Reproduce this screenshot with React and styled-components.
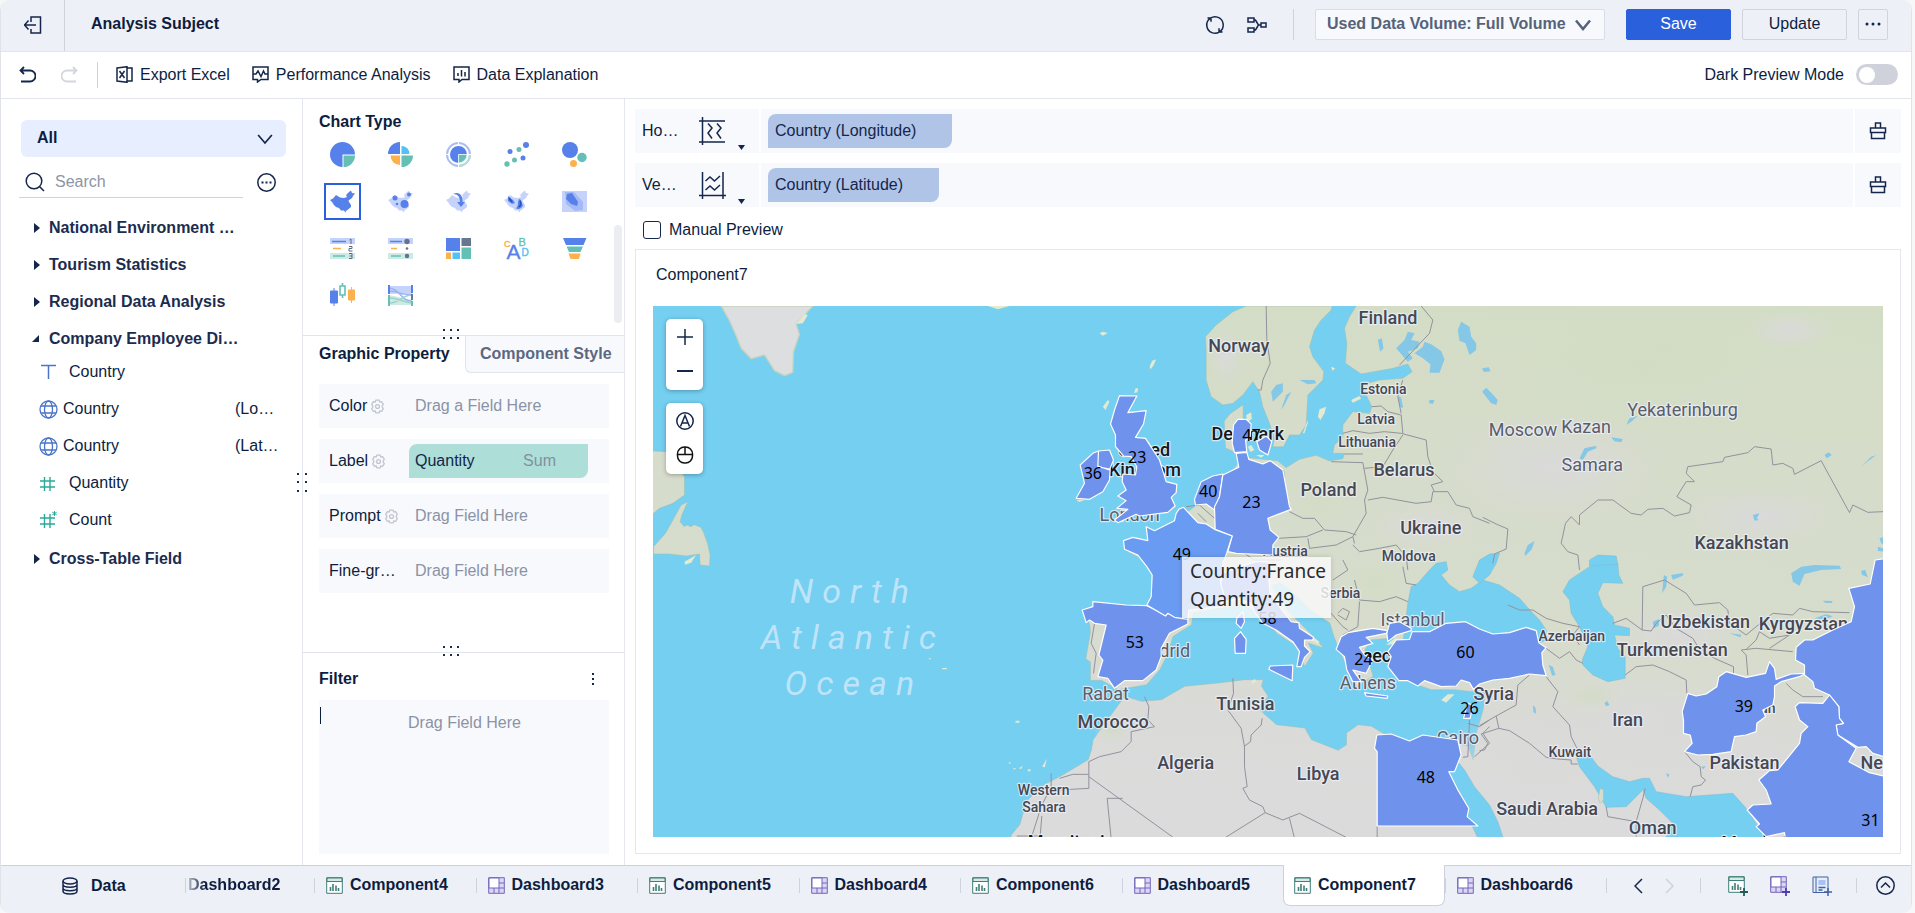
// --------------------------------------------------
//   Import
// --------------------------------------------------

import React from 'react';
import styled, { createGlobalStyle, css } from 'styled-components';



// --------------------------------------------------
//   Styles : Page
// --------------------------------------------------

const GlobalStyle = createGlobalStyle`
  * {
    box-sizing: border-box;
  }

  body {
    margin: 0;
    background: #f7f7f8;
    font-family: 'Liberation Sans', Arial, sans-serif;
    font-size: 16px;
    line-height: 20px;
    color: #0d1d40;
  }

  button, input, select {
    margin: 0;
    padding: 0;
    border: 0;
    background: none;
    font: inherit;
    color: inherit;
  }

  button {
    cursor: pointer;
  }

  svg {
    display: block;
    flex: none;
  }
`;

const Page = styled.div`
  display: flex;
  flex-direction: column;
  min-height: 100vh;
  margin-right: 3px;
  border: solid #e0e3e8;
  border-width: 0 1px;
  border-radius: 10px;
  overflow: hidden;
  background: #ffffff;
`;

const Icon = styled.svg`
  fill: none;
  stroke: ${({ $color }) => $color || '#14264b'};
  stroke-width: 1.5;
`;

const VerticalLine = styled.span`
  width: 1px;
  height: ${({ $height }) => $height}px;
  background: #cdd2dc;
`;



// --------------------------------------------------
//   Styles : Header
// --------------------------------------------------

const Header = styled.header`
  display: flex;
  align-items: center;
  height: 52px;
  padding-right: 23px;
  padding-bottom: 2px;
  border-bottom: 1px solid #e1e5ec;
  background: #edf0f6;
`;

const ExitButton = styled.button`
  display: flex;
  align-items: center;
  justify-content: center;
  align-self: flex-start;
  width: 64px;
  height: 51px;
  padding-top: 1px;
  padding-bottom: 3px;
  border-right: 1px solid #cdd2dc;
`;

const Title = styled.h1`
  flex: 1;
  margin: 0;
  padding-bottom: 2px;
  padding-left: 26px;
  font-size: 16px;
  line-height: 20px;
`;

const HeaderIcons = styled.div`
  display: flex;
  align-items: center;
  gap: 22px;
  height: 31px;
  margin-right: 21px;
  padding-right: 26px;
  border-right: 1px solid #cdd2dc;
`;

const HeaderButtons = styled.div`
  display: flex;
  gap: 11px;
`;

const SelectBox = styled.div`
  position: relative;
  display: flex;
  align-items: center;
  
  select {
    width: 100%;
    height: 100%;
    appearance: none;
    font-weight: bold;
    outline: 0;
  }
  
  svg {
    position: absolute;
    right: 13px;
    pointer-events: none;
  }
`;

const VolumeSelect = styled(SelectBox)`
  width: 290px;
  height: 31px;
  margin-right: 10px;
  border: 1px solid #d9dde5;
  border-radius: 2px;
  background: #f7f9fd;
  color: #56627a;
  
  select {
    padding-left: 11px;
    padding-bottom: 2px;
  }
`;

const HeaderButton = styled.button`
  display: flex;
  align-items: center;
  justify-content: center;
  width: ${({ $narrow }) => $narrow ? 30 : 105}px;
  height: 31px;
  padding-bottom: 2px;
  border: 1px solid #cfd4dd;
  border-radius: 2px;
  
  ${({ $primary }) => $primary && css`
    border-color: #2a60dc;
    background: #2a60dc;
    color: #ffffff;
  `}
`;



// --------------------------------------------------
//   Styles : Toolbar
// --------------------------------------------------

const Toolbar = styled.div`
  display: flex;
  align-items: center;
  height: 47px;
  padding: 0 13px 1px 18px;
  border-bottom: 1px solid #e4e6ee;
`;

const HistoryButtons = styled.div`
  display: flex;
  gap: 25px;
  margin-right: 19px;
`;

const ToolButtons = styled.div`
  display: flex;
  gap: 22px;
  margin-left: 18px;
`;

const ToolButton = styled.button`
  display: flex;
  align-items: center;
  gap: 7px;
`;

const DarkMode = styled.label`
  display: flex;
  align-items: center;
  gap: 12px;
  margin-left: auto;
`;

const Switch = styled.input`
  display: flex;
  align-items: center;
  appearance: none;
  width: 42px;
  height: 21px;
  padding: 0 3px;
  border-radius: 11px;
  background: #cfd2da;
  
  &::before {
    content: '';
    width: 16px;
    height: 16px;
    border-radius: 50%;
    background: #ffffff;
  }
  
  &:checked {
    justify-content: flex-end;
    background: #2a60dc;
  }
`;



// --------------------------------------------------
//   Styles : Field Panel
// --------------------------------------------------

const Body = styled.div`
  display: flex;
  flex: 1;
`;

const FieldPanel = styled.aside`
  position: relative;
  width: 302px;
  padding: 21px 0 0 18px;
  border-right: 1px solid #e4e7ef;
`;

const AllSelect = styled(SelectBox)`
  width: 265px;
  height: 37px;
  margin-left: 2px;
  border-radius: 6px;
  background: #e6eeff;
  
  select {
    padding-left: 16px;
    padding-bottom: 2px;
  }
`;

const SearchRow = styled.div`
  display: flex;
  align-items: center;
  gap: 14px;
  height: 41px;
  margin-bottom: 14px;
`;

const SearchBox = styled.label`
  display: flex;
  align-items: center;
  gap: 10px;
  width: 224px;
  height: 41px;
  padding-top: 9px;
  padding-left: 6px;
  border-bottom: 1px solid #cfd3dd;
  
  input {
    width: 170px;
    outline: 0;
  }
  
  input::placeholder {
    color: #8c95a6;
    opacity: 1;
  }
`;

const MoreButton = styled.button`
  padding-top: 9px;
`;

const Tree = styled.ul`
  display: flex;
  flex-direction: column;
  gap: 5px;
  margin: 0;
  padding: 0 0 0 12px;
  list-style: none;
`;

const Folder = styled.button`
  display: flex;
  align-items: center;
  gap: 8px;
  height: 32px;
  font-weight: bold;
  color: #1c2c4f;
`;

const FieldList = styled.ul`
  display: grid;
  grid-auto-rows: 32px;
  gap: 5px;
  margin: 0;
  padding: 1px 0 2px 8px;
  list-style: none;
`;

const Field = styled.li`
  display: flex;
  align-items: center;
  gap: ${({ $globe }) => $globe ? 5 : 12}px;
  
  em {
    width: 67px;
    margin-left: auto;
    font-style: normal;
  }
`;



// --------------------------------------------------
//   Styles : Chart Panel
// --------------------------------------------------

const ChartPanel = styled.section`
  display: flex;
  flex-direction: column;
  width: 322px;
  border-right: 1px solid #e4e7ef;
`;

const PanelTitle = styled.h2`
  margin: 0;
  font-size: 16px;
  line-height: 20px;
`;

const ChartTypes = styled.div`
  position: relative;
  height: 237px;
  padding: 13px 0 0 16px;
  border-bottom: 1px solid #e1e4ec;
`;

const ChartGrid = styled.div`
  display: grid;
  grid-template-columns: repeat(5, 58px);
  grid-auto-rows: 47px;
  margin-top: -1px;
  margin-left: -5px;
`;

const ChartButton = styled.button`
  display: flex;
  align-items: center;
  justify-content: center;
  width: 37px;
  height: 37px;
  margin: 5px 10px;
  border: 2px solid ${({ $active }) => $active ? '#2a60dc' : 'transparent'};
`;

const ScrollThumb = styled.span`
  position: absolute;
  top: 126px;
  right: 2px;
  width: 8px;
  height: 98px;
  border-radius: 4px;
  background: #ebedf3;
`;

const Grip = styled.span`
  position: absolute;
  bottom: -5px;
  left: 140px;
`;

const SideGrip = styled.span`
  position: absolute;
  top: 374px;
  right: -7px;
  z-index: 1;
`;

const Tabs = styled.div`
  display: grid;
  grid-template-columns: 162px 1fr;
  height: 37px;
  font-weight: bold;
`;

const Tab = styled.button`
  padding-bottom: 1px;
  padding-left: 16px;
  text-align: left;
  font-weight: bold;
  white-space: nowrap;
  
  ${({ $inactive }) => $inactive && css`
    border: solid #e1e4ec;
    border-width: 0 0 1px 1px;
    border-radius: 0 0 0 6px;
    background: #f8f9fd;
    color: #5c6880;
    padding-bottom: 0;
    padding-left: 14px;
  `}
`;

const Properties = styled.div`
  position: relative;
  display: flex;
  flex-direction: column;
  gap: 11px;
  height: 280px;
  padding: 11px 15px 0 16px;
  border-bottom: 1px solid #e1e4ec;
`;

const Property = styled.div`
  display: flex;
  align-items: center;
  height: 44px;
  padding-left: 10px;
  background: #f8f9fd;
`;

const PropertyName = styled.span`
  display: flex;
  align-items: center;
  gap: 3px;
  width: 80px;
  
  button {
    padding-top: 1px;
  }
`;

const DropHint = styled.span`
  padding-left: 6px;
  color: #8a93a5;
`;

const Pill = styled.div`
  display: flex;
  align-items: center;
  height: 34px;
  padding: 0 36px 0 7px;
  border-radius: 8px 0 8px 0;
  background: #b0c4e8;
  color: #14264b;
`;

const QuantityPill = styled(Pill)`
  justify-content: space-between;
  width: 179px;
  padding: 0 32px 0 6px;
  background: #addfd8;
  
  em {
    font-style: normal;
    color: #82909e;
  }
`;

const Filter = styled.div`
  display: flex;
  flex: 1;
  flex-direction: column;
  padding: 16px 15px 11px 16px;
`;

const FilterHead = styled.div`
  display: flex;
  align-items: center;
  justify-content: space-between;
  height: 20px;
  margin-bottom: 11px;
  
  button {
    padding: 0 14px 0 8px;
  }
`;

const FilterBox = styled.div`
  display: flex;
  flex: 1;
  padding: 7px 1px;
  background: #f8f9fd;
  color: #8a93a5;
  
  span {
    padding: 6px 0 0 87px;
  }
`;

const Caret = styled.i`
  width: 1px;
  height: 17px;
  background: #0d1d40;
`;



// --------------------------------------------------
//   Styles : Preview
// --------------------------------------------------

const Main = styled.main`
  display: flex;
  flex: 1;
  flex-direction: column;
  min-width: 0;
  padding: 10px 10px 11px;
`;

const Axis = styled.div`
  display: grid;
  grid-template-columns: 124px 1fr 46px;
  gap: 2px;
  height: 44px;
  margin-bottom: 10px;
`;

const AxisCell = styled.div`
  display: flex;
  align-items: center;
  padding-left: 7px;
  background: #f8f9fd;
  
  &:last-child {
    justify-content: center;
    padding: 0;
  }
`;

const AxisName = styled.span`
  width: 56px;
`;

const AxisButton = styled.button`
  display: flex;
  align-items: flex-end;
  gap: 12px;
  padding-top: 4px;
  
  svg:first-child {
    margin-bottom: 5px;
  }
`;

const ManualPreview = styled.label`
  display: flex;
  align-items: center;
  gap: 8px;
  height: 26px;
  margin-bottom: 6px;
  padding-left: 8px;
  
  input {
    appearance: none;
    width: 18px;
    height: 18px;
    border: 1px solid #14264b;
    border-radius: 3px;
    background: #ffffff;
  }
  
  input:checked {
    background: #2a60dc;
  }
`;

const Preview = styled.section`
  display: flex;
  flex: 1;
  flex-direction: column;
  padding: 0 17px 16px;
  border: 1px solid #e4e7ef;
`;

const PreviewTitle = styled.h3`
  margin: 0;
  padding: 15px 3px 21px;
  font-size: 16px;
  line-height: 20px;
  font-weight: normal;
`;

const MapBox = styled.div`
  position: relative;
  flex: 1;
  overflow: hidden;
  
  > svg {
    position: absolute;
    width: 100%;
    height: 100%;
  }
`;

const MapControls = styled.div`
  position: absolute;
  top: 13px;
  left: 13px;
  display: flex;
  flex-direction: column;
  gap: 13px;
`;

const MapControlGroup = styled.div`
  display: grid;
  grid-auto-rows: 34px;
  width: 37px;
  height: 71px;
  padding-top: 1px;
  border-radius: 5px;
  background: #ffffff;
  box-shadow: 0 1px 4px rgba(0, 0, 0, .3);
  
  button {
    display: flex;
    align-items: center;
    justify-content: center;
  }
`;

const Tooltip = styled.div`
  position: absolute;
  top: 251px;
  left: 529px;
  width: 149px;
  height: 61px;
  padding: 0 8px;
  background: rgba(250, 250, 250, .82);
  box-shadow: 0 0 5px rgba(0, 0, 0, .15);
  font-family: 'Noto Sans', sans-serif;
  font-size: 19px;
  line-height: 28px;
  color: #2b2b2b;
  white-space: nowrap;
`;

const Land = styled.path`
  fill: url(#land);
  stroke: #9dbfae;
  stroke-width: 1.5;
`;

const Sea = styled.path`
  fill: #74cff1;
  stroke: #86b9c6;
  stroke-width: 1.5;
`;

const Lake = styled.path`
  fill: #84c7e6;
`;

const Islet = styled.path`
  fill: #e4e9cf;
`;

const Border = styled.path`
  fill: none;
  stroke: #92929e;
  stroke-width: 3;
  stroke-linejoin: round;
`;

const Country = styled.path`
  fill: ${({ $hover }) => $hover ? '#6a9bf2' : '#6f93ed'};
  stroke: #ffffff;
  stroke-width: 3.5;
  stroke-linejoin: round;
`;

const Place = styled.text`
  font-family: Roboto, sans-serif;
  font-size: ${({ $small }) => $small ? 42 : 54}px;
  font-weight: ${({ $city }) => $city ? 400 : 500};
  fill: ${({ $dark, $city }) => $dark ? '#15181d' : $city ? '#5a5d6a' : '#454852'};
  stroke: rgba(238, 240, 248, .8);
  stroke-width: 7;
  stroke-linejoin: round;
  paint-order: stroke;
`;

const Ocean = styled.text`
  font-family: Roboto, sans-serif;
  font-size: 102px;
  font-weight: 400;
  font-style: italic;
  letter-spacing: 27px;
  text-anchor: middle;
  fill: #bfe4f9;
`;

const Value = styled.text`
  font-family: 'Noto Sans', sans-serif;
  font-size: 48px;
  text-anchor: middle;
  fill: #000000;
`;



// --------------------------------------------------
//   Styles : Footer
// --------------------------------------------------

const Footer = styled.footer`
  display: flex;
  height: 48px;
  border-top: 1px solid #cbd2de;
  background: #edf0f6;
  font-weight: bold;
`;

const DataButton = styled.button`
  display: flex;
  align-items: center;
  gap: 13px;
  width: 184px;
  height: 39px;
  padding-left: 61px;
  font-weight: bold;
`;

const Sheets = styled.nav`
  display: grid;
  flex: 1;
  grid-template-columns: 129px repeat(8, minmax(0, 1fr));
  height: 41px;
  margin-top: -1px;
  overflow: hidden;
`;

const Sheet = styled.button`
  display: flex;
  align-items: center;
  gap: 7px;
  padding-bottom: 1px;
  font-weight: bold;
  
  &::before {
    content: '';
    width: 1px;
    height: 15px;
    margin-right: 4px;
    background: #cdd2dc;
  }
  
  ${({ $cut }) => $cut && css`
    gap: 0;
    
    &::before {
      margin-right: 2px;
    }
    
    span {
      background: linear-gradient(90deg, #b9c0cc, #0d1d40 16px);
      background-clip: text;
      color: transparent;
    }
  `}
  
  ${({ $active }) => $active && css`
    padding-bottom: 0;
    border: solid #cbd2de;
    border-width: 0 1px 1px 1px;
    border-radius: 0 0 7px 7px;
    background: #ffffff;
    
    &::before {
      width: 0;
      margin-right: 3px;
    }
  `}
`;

const FooterTools = styled.div`
  display: flex;
  align-items: center;
  width: 305px;
  height: 39px;
`;

const FooterGroup = styled.div`
  display: flex;
  align-items: center;
  gap: 22px;
  padding: 0 ${({ $end }) => $end}px 0 ${({ $start }) => $start}px;
`;



// --------------------------------------------------
//   Data
// --------------------------------------------------

const CHINA = 'M0 10 3 8.500 6 5l4 2.500 4 .5 3-1-1-2 3-3 2-1.500 1 2.500 3 .5-2 2.500-1 2-2 1.500-1.500 1L19 12l2 3v2l-3 2.500-2 1.500-.5 1.500-1.500-2h-3L9 18l-3-1-2.500-2.500-1-2z';

const blue = '#5680ea';
const teal = '#64bfb5';
const orange = '#fdb04e';
const sky = '#52c1f5';
const pale = '#c5d3fb';

const chartTypes = [
  { name: 'Pie', icon: <><path d="M12.500 12.500V25A12.500 12.500 0 1 1 25 12.500z" fill={blue} /><path d="M13.500 13.500H25A11.500 11.500 0 0 1 13.500 25z" fill={teal} /></> },
  { name: 'Rose', icon: <><path d="M12 12H0A12 12 0 0 1 12 0z" fill={blue} /><path d="M13.500 12V4a8 8 0 0 1 8 8z" fill={sky} /><path d="M12 13.500V23a9.500 9.500 0 0 1-9.500-9.500z" fill={orange} /><path d="M13.500 13.500H25A11.500 11.500 0 0 1 13.500 25z" fill={teal} /></> },
  { name: 'Multi-Pie', icon: <><circle cx="12.500" cy="12.500" r="11.500" fill="none" stroke="#a9bcf4" strokeWidth="2" /><path d="M12.500 24A11.500 11.500 0 0 0 24 12.500" fill="none" stroke="#b4ded9" strokeWidth="2" /><path d="M12.500 0v4M0 12.500h4M12.500 21v4M21 12.500h4" stroke="#fff" /><circle cx="12.500" cy="12.500" r="8.500" fill={blue} /><path d="M12.500 12.500H21A8.500 8.500 0 0 1 12.500 21z" fill={teal} stroke="#fff" strokeWidth=".8" /></> },
  { name: 'Scatter', icon: <g fill={blue}><circle cx="6" cy="9.500" r="2.500" /><circle cx="22" cy="3" r="3" /><circle cx="19" cy="16" r="2.500" /><g fill={teal}><circle cx="15" cy="7.500" r="2.500" /><circle cx="10.500" cy="18" r="2.500" /><circle cx="3" cy="22" r="2.700" /></g></g> },
  { name: 'Bubble', icon: <><circle cx="8" cy="8" r="8" fill={blue} /><circle cx="20" cy="15.500" r="4.700" fill={teal} /><circle cx="11.500" cy="21.500" r="3.500" fill={orange} /></> },
  { name: 'Area Map', active: true, icon: <path d={CHINA} fill={blue} transform="translate(0 1)" /> },
  { name: 'Point Map', icon: <g transform="translate(0 1)"><path d={CHINA} fill={pale} /><g fill={blue}><circle cx="7" cy="8" r="2.500" /><circle cx="16.500" cy="14" r="4" /><circle cx="21" cy="4.500" r="2" /><circle cx="9" cy="14" r="1.300" /></g></g> },
  { name: 'Flow Map', icon: <g transform="translate(0 1)"><path d={CHINA} fill={pale} /><path d="M7 4c6-3 10 1 9.500 8h2.500l-4 5-4-5h3c0-5-2-8-7-8z" fill={blue} /></g> },
  { name: 'Heat Map', icon: <g transform="translate(0 1)"><path d={CHINA} fill={pale} /><path d="M4 6l5 4 2 3-3 1-4-3zM15 9c3 0 2 4 4 6-1 4-6 5-7 3 3-2 1-5 3-9z" fill={blue} /><path d="M5 8l3 4M16 11c2 3 0 5-1 6" stroke="#2750b8" strokeWidth="1.500" fill="none" /></g> },
  { name: 'Density', icon: <><path d="M0 2h25v21H0z" fill={pale} /><path d="M3 3h9l9 10v8l-8 1-9-7z" fill="#a5b9f4" /><path d="M5 5l5-1 6 9-1 4-6-2-5-5z" fill={blue} /></> },
  { name: 'Grouped Table', icon: <><path d="M0 2h25v6H0z" fill={pale} /><path d="M0 17h25v6H0z" fill="#cdeae5" /><path d="M2 5.500h14" stroke={blue} strokeWidth="1.500" /><path d="M3 12.500h8" stroke={orange} strokeWidth="1.500" /><path d="M3 20h12" stroke={teal} strokeWidth="1.500" /><path d="M19.500 4l1.500-1v5M19 10.500h3v2h-3v2.500h3.500M19 17.500h3v5h-3M19.500 20H22" fill="none" stroke="#5d6a83" /></> },
  { name: 'KPI Table', icon: <><path d="M0 2h25v6H0z" fill={pale} /><path d="M0 17h25v6H0z" fill="#cdeae5" /><path d="M2 5.500h12" stroke={blue} strokeWidth="1.500" /><path d="M3 12.500h6" stroke={orange} strokeWidth="1.500" /><path d="M3 20h10" stroke={teal} strokeWidth="1.500" /><g fill="#66718b"><circle cx="19" cy="5.500" r="2.700" /><circle cx="19" cy="12.500" r="1.300" /><circle cx="19" cy="20" r="2.200" /></g></> },
  { name: 'Treemap', icon: <><path d="M0 2h14v13H0z" fill={blue} /><path d="M15.500 2H25v8h-9.500z" fill="#69768f" /><path d="M15.500 11.500H25V23h-9.500z" fill={teal} /><path d="M0 16.500h5V23H0z" fill={orange} /><path d="M6.500 16.500H14V23H6.500z" fill={sky} /></> },
  { name: 'Word Cloud', icon: <g fontFamily="Liberation Sans"><text x="0" y="11" fontSize="9" fill={orange} stroke={orange} strokeWidth=".4">C</text><text x="14.500" y="10" fontSize="11" fill={teal} stroke={teal} strokeWidth=".3">B</text><text x="2.500" y="23" fontSize="21" fill={blue} stroke={blue} strokeWidth=".3">A</text><text x="17.500" y="20" fontSize="10" fill={sky} stroke={sky} strokeWidth=".4">D</text></g> },
  { name: 'Funnel', icon: <><path d="M1 2h23.500l-3 7H4z" fill={blue} /><path d="M4.500 10.500H21l-2.500 5.500H7z" fill={teal} /><path d="M6.500 17.500h12L17 23H8.500z" fill={orange} /></> },
  { name: 'Box Plot', icon: <><path d="M4 5v18M0.500 8h7v12h-7z" fill={blue} stroke={blue} /><path d="M12.500 0v3m0 9v3M10 3h5v9h-5z" fill="none" stroke={teal} strokeWidth="1.600" /><path d="M21.500 4v16M18.500 7h6v10h-6z" fill={orange} stroke={orange} /></> },
  { name: 'Sankey', icon: <><path d="M1 3l23 0v7L1 11z" fill={pale} /><path d="M1 12l23 5v5L1 22z" fill="#cdeae5" /><path d="M1 5c12 1 12 14 23 13M1 8c10 0 12 5 23 3" stroke="#9db2f1" strokeWidth="1.500" fill="none" /><path d="M1 20c12 0 12-8 23-8M1 15c10 0 12 4 23 5" stroke="#9bd3cc" strokeWidth="1.500" fill="none" /><path d="M1 2v9M24 2v8" stroke={blue} strokeWidth="2" /><path d="M24 11v6" stroke="#69768f" strokeWidth="2" /><path d="M1 12v11M24 18v5" stroke={teal} strokeWidth="2" /></> },
];

const properties = [
  { name: 'Color', gear: true, hint: 'Drag a Field Here' },
  { name: 'Label', gear: true },
  { name: 'Prompt', gear: true, hint: 'Drag Field Here' },
  { name: 'Fine-gr…', hint: 'Drag Field Here' },
];

const sheets = ['Component4', 'Dashboard3', 'Component5', 'Dashboard4', 'Component6', 'Dashboard5', 'Component7', 'Dashboard6'];



// --------------------------------------------------
//   Icons
// --------------------------------------------------

const Chevron = ({ size = 14, color }) => (
  <Icon width={size} height={size} viewBox="0 0 14 14" $color={color}><path d="M1 3.500l6 7 6-7" /></Icon>
);

const GripDots = ({ vertical }) => (
  <svg width={vertical ? 12 : 18} height={vertical ? 20 : 11} fill="#1c2c4f">
    {vertical
      ? [0, 8, 17].map(y => <path key={y} d={`M0 ${y}h2v2H0zM8 ${y}h2v2H8z`} />)
      : [0, 7, 14].map(x => <path key={x} d={`M${x} 0h2v2h-2zM${x} 8h2v2h-2z`} />)
    }
  </svg>
);

const Gear = () => (
  <Icon width="15" height="15" viewBox="0 0 14 14" $color="#c0c5cf">
    <path d="M5.500 1h3l.6 1.800 1.800-.3 1.500 2.500L11.200 7l1.200 2-1.500 2.500-1.800-.3L8.500 13h-3l-.6-1.800-1.800.3L1.600 9l1.200-2-1.200-2 1.500-2.500 1.800.3z" strokeWidth="1.200" />
    <circle cx="7" cy="7" r="1.800" strokeWidth="1.200" />
  </Icon>
);

const Globe = () => (
  <Icon width="19" height="19" viewBox="0 0 19 19" $color="#4b74c9">
    <g strokeWidth="1.300"><circle cx="9.500" cy="9.500" r="8.500" /><ellipse cx="9.500" cy="9.500" rx="4" ry="8.500" /><path d="M2 6h15M2 13h15" /></g>
  </Icon>
);

const Hash = ({ star }) => (
  <Icon width="18" height="18" viewBox="0 0 18 18" $color="#2ba89b">
    <path d="M5.500 3v14M11 3v14M1 7h15M1 13h15" strokeWidth="1.400" />
    {star && <path d="M15.500 0v5M13.300 1.200l4.400 2.600M17.700 1.200l-4.400 2.600" strokeWidth="1" />}
  </Icon>
);

const ComponentIcon = ({ add }) => (
  <svg width={add ? 20 : 17} height={add ? 20 : 17} fill="#fff" stroke="#3f7f79">
    <path d="M.7.7h15.600v15.600H.7z" />
    <path d="M1 1h15v3.500H1z" fill="#d5ebe8" />
    <path d="M4.500 14v-4M7 14V7M10 14V8.500M12.500 14v-3" strokeWidth="1.600" />
    {add && <path d="M12 16h8M16 12v8" stroke="#1f5c58" strokeWidth="1.800" />}
  </svg>
);

const DashboardIcon = ({ add }) => (
  <svg width={add ? 20 : 17} height={add ? 20 : 17} fill="#dcd6f5" stroke="#7266bd">
    <path d="M.7.7h15.600v15.600H.7z" />
    <path d="M1 1h10v10H1z" fill="#fff" />
    <path d="M11 6h5M6 11v5M11 11v5M11 11h5" />
    {add && <path d="M12 16h8M16 12v8" stroke="#4f3fae" strokeWidth="1.800" />}
  </svg>
);

const Clear = () => (
  <Icon width="18" height="18" viewBox="0 0 18 18"><path d="M6.500 6V1h5v5M1.500 6h15v4.500h-15zM2.500 10.500v6h13v-6" /></Icon>
);



// --------------------------------------------------
//   Map
// --------------------------------------------------

const WorldMap = () => (
  <svg viewBox="-1221 18 3693 1593" preserveAspectRatio="xMidYMid slice" role="img" aria-label="Map">
    <defs>
      <linearGradient id="land" gradientUnits="userSpaceOnUse" x1="1100" y1="0" x2="1000" y2="1500">
        <stop offset="0" stopColor="#d3ddc5" />
        <stop offset=".35" stopColor="#d6dccb" />
        <stop offset=".65" stopColor="#d7dccb" />
        <stop offset=".85" stopColor="#dadad8" />
        <stop offset="1" stopColor="#dbdbdb" />
      </linearGradient>
      <radialGradient id="dry">
        <stop offset="0" stopColor="#dadada" />
        <stop offset="1" stopColor="#dadada" stopOpacity="0" />
      </radialGradient>
      <radialGradient id="green">
        <stop offset="0" stopColor="#d2dcc4" stopOpacity=".8" />
        <stop offset="1" stopColor="#d2dcc4" stopOpacity="0" />
      </radialGradient>
    </defs>
    
    {/* 海 */}
    <path d="M-1221 18h3693v1593h-3693z" fill="#74cff1" />
    
    {/* 陸地 */}
    <g transform="translate(-1230 0)">
      <path d="M215 18l25 44 18 41 17 42 30 31 40-11 30 47 30 15 25-10 2-62 18-52-10-31 50-54z" fill="#dddee0" stroke="#c5d3bd" strokeWidth="4" />
      <Land d="M0 452l50 3 55 75v55l-35 25-40 15-30 25zM115 605l-20 10-22 40-25 45-36 40 0 22h48l50 6 40-6 2 33 28 3 2-33-8-35-12-33-8-15-20-8-10 6-12-5-8 5-12-15 5-20z" />
      <Islet d="M140 765l-35 20 2 9 18-6zM1015 18l30 10 35-10zM440 72l25-30 10 3-15 25zM838 1075h6v3h-6zM878 1104h14v4h-14zM1098 1262h12v6h-12zM1108 1405l12-8-5 10zM1178 1400l14-24-6 26zM1135 1408h8v6h-8zM1092 1404h6v4h-6zM1078 1387h5v4h-5z" />
    </g>
    <Land d="M560 18L520 35 470 75 438 110l2 40v90l15 50 35 25 30-5 30-25 30-40 20 30 10 45 20 50 15 45-5 25 32 0 18-35h30l20-30 5-90 45-45 3-25-33-45-10-30 15-50 20-30 30-30 3-12z" />
    <Land d="M890 18L870 50 855 85l7 45-4 60 47 32 95-17 45-13 13 23-28 20-70 5-55 15 15 30 17 35-7 20-50-5-30 40v35l-25 25-5 25h35l-5 16-40 7-40-17-50 12-40 25-25-20-25-3-65-7-35-15-32-14-4-80 17-22 40-28v70l-15 40 5 60-35 42-35 15-30 15-25 55-25 20-30 20-5 20-85 30 5 25-70 5v25l40 20 15 15 28 40-3 60-13 35-162-10-30 25 10 35 2 20-14 80 14 10v55h33l50 28 85-15 40-45 20-40 20-60 55-35 5-35 60-10 90-15 60 35 40 50 60 40 25 60 25-40-15-30 45 15-15-20-45-45-40-40-55-80 25-10 30 20 60 60 60 40 12 40 18 45 30 65 20 40 50-30-25-80 20-30 65-5 20 45 35 90 60 20h70l90 10-5 50-20 70-10 80-15-40-90-25-50 20-100-25-50-30-40-5-35 25v35l-25 17-80-32-20-35-85-10-40-35-15-15 30-35-20-30 5-20-55 0-80 10-100 10-70 40-60 5-50-15-30 40-65 90-5 30-10 30-50 30-25 15-65 35-45 45-20 70-25 30-20 60V1640H2500V0H890z" />
    
    {/* 地形 */}
    <g fill="url(#dry)">
      <ellipse cx="1480" cy="500" rx="330" ry="170" />
      <ellipse cx="2190" cy="90" rx="130" ry="60" />
      <ellipse cx="1100" cy="680" rx="170" ry="70" />
      <ellipse cx="1850" cy="1000" rx="220" ry="90" />
      <ellipse cx="1750" cy="1260" rx="240" ry="130" />
      <ellipse cx="1450" cy="1400" rx="330" ry="200" />
      <ellipse cx="2100" cy="650" rx="230" ry="90" />
      <ellipse cx="500" cy="170" rx="50" ry="90" />
    </g>
    <g fill="url(#green)">
      <ellipse cx="160" cy="1290" rx="60" ry="40" />
      <ellipse cx="950" cy="850" rx="90" ry="60" />
      <ellipse cx="1750" cy="200" rx="400" ry="180" />
      <ellipse cx="1600" cy="1190" rx="90" ry="40" />
      <ellipse cx="780" cy="600" rx="100" ry="80" />
    </g>
    
    {/* 内海 */}
    <Sea d="M1045 910l10-50 20-10 35-40 20-20 30-5 5 25-20 15 25 30 30 20 35-10 35-25 50 15 60 40 40 45 20 20 20 30v30l-50 20-100-5-60-15-60 10-60 22-70-2-30-20z" />
    <Sea d="M1260 780l30-18 30-2-10 30-20 35-30 25-20-20z" />
    <g transform="translate(1260 780)">
      <Sea d="M330 20l40-17 45 7 3 35 12 25-60-2-15 32 15 40 30 30 5 25 45 10v22l-45-2 10 40 22 25v65l-52 10-45-20-30-30-2-15 17-40-25-60-25-40-5-40-20-25 20-35z" />
      <Sea d="M290 588l35-10 30 40 45 32 50 15 40-10h20l20 40 90 15 140-10 40 45 37 55 20 40H555l25-50-40-40-40-35-10-25-50 50-60 2-35-62-45-60z" />
      <Land d="M362 685l10 4v32l-10 8-6-14z" />
      <Lake d="M520 185l18-8v20l-15 8zM548 100l5-55 10 5-3 30zM575 45l35-6v8l-30 12zM940 65l-5-25 30-20 40-5 75 2 5 10-60 3-50 12-15 35zM1030 122l28 1v6h-20zM1005 175l35-12 20 6-25 10zM750 220l35 4-2 8zM208 315l12 5 8 25-10 2zM375 430l8-7 7 12-10 4zM160 435l8 8 2 18-8-4zM560 640l10 3-5 10zM665 620l14-2-8 10zM1145 32l12-2 8 22-18-8z" />
    </g>
    <Sea d="M1168 1415l27-30 20 25 30 50 45 55 25 50 20 60h-75l-35-75 3-25z" />
    <Sea d="M1590 780l25-15 55 3 5 25-85 5z" />
    <Lake d="M1065 160l25-20 5-15 20 8 30 20 10 25-15 40h-30l3-25-25-20zM1010 145l25-25 10-25 20 5-10 20 25 5-5 20-30 10 15 20-15 10zM955 120l12-5 5 30-10 10zM1195 90l10-25 25 15 5 30 15 20v20l-20 15-12-35-18-8zM635 275l15-20 20-5v25l-30 30zM680 285l15-10-20 40-10 15zM720 240l45 0 5 10-25 3zM1110 300l15 0-5 12-12-3zM1268 205l20-3 5 12-20 2zM1015 288l10 5 6 30-10-2zM1268 275l12-12 15 15 20 22-5 15-15-5zM1395 760l10-25 20-12-8 25-20 20zM1560 475l15-30 35-8v8l-25 10-15 25zM1655 412l35 5-5 10-20-3zM1700 375l10-20 25-8-20 18zM2080 645l20-5-8 15 5 5-12 2zM2295 465l12-8 10 8-15 10zM2405 500l30-30 15-4-25 18zM2455 740l17 5v10l-17-2zM2460 715l15-5v25l-10-5z" />
    <Islet d="M120 100l10-5 15 4-15 8zM270 200l8-18 12-4-8 18-8 12zM228 265l8 0-2 12-10 2zM130 320l15-20 5 5-12 25zM560 345l15-8 2 20-15 10zM565 440l10-5 10 15-12 6zM590 465l25 0-10 8zM775 350l5-22 20-8-5 20-12 20zM815 200l12 5-8 8zM875 300l25-12 5 8-25 12zM730 400l15-40 0 8-10 32zM50 600l25 0-15 6zM980 1035l25-20 25 5-25 12zM1145 1200l20-17 20 0-15 15-10 10zM575 1145l10-8 5 5-8 10zM760 1010l20 15-5 8-15-10z" />
    
    {/* 国境 */}
    <Border d="M620 18l2 102 10 70-22 50-5 30h-10M1085 18l35 42-10 40-90 95M1030 240l-15 50 10 50M937 320l28-2 20 17 40 10 5 55M850 400l30-8 50 8 45-5 50 5 75 20 5 50 15 45 30 30-35 10 10 20M815 485l95 3 15 82-10 30 5 40-40 70 5 20M1030 405l-30 45-30 50-55 5M925 600l45-8 100 18 45-5 5-30h45l25 40 40 10 10 25 50 20M672 510l5 50M690 635l40 20h35l30 35 65 5 30 10M655 715l85-5 50-20M745 715l5 30 80-10 50-25M880 735l20 20 60-10 50-10 30 35 5 40M380 620l40-5 45 40M415 640l25 25M855 462h55M1270 652l40 20 35 15-5 60-35 15-5 28M555 760l30 20 80 0" />
    <g transform="translate(0 780)">
      <Border d="M850 0l15 30-45 30M885 60l15 60 60 5 50-15 35 15M815 160l35 40 15 10M900 125l-5 75-45 25M835 160l15-15 20 10-10 25-25-15M1030 20l10 50 30 5M520 355l2 45-17 50 40 55 10 55v60l8 60-13 5 20 35 40 20 7 18 53 22 50-20 140 72M608 475l-3 20-30 30-2 20-20 15M617 758l-120 75M690 775l15 60M255 410l13 30-3 40 20 20-70 15v30l-30 30-65 15-32 15v80l-88 5M88 650l257 185M155 835l-12-120h47M953 798v40M1230 480l-5 110-15 2M1225 490l35 10 30-20M1245 590l45-40-20-30 20-20M105 190l-10 60 15 30-8 60M0 655l40-12h48M-25 640l0 40-30 60-30 95M-128 828h70l5-60" />
    </g>
    <g transform="translate(1260 780)">
      <Border d="M150 345l-35 30-5 60-60 33-50 29M50 468l8 37 32 7 60 38 50 42 35 5M58 505L5 522l20 28-10 20-15 2M200 350l35 45-15 45 50 55 5 35 15 30 12 22M235 597l40 3v12h20M615 575l25 30 22 15 3 30 13 10-13 15-25 5-8 30M437 345l33-25 50-5 50 20 50 25 2 40M490 80l-2 130-48-35-40 15M490 80l65-20 65 40 25 35 75-7 25 22 5 40 50 35 30-25 50-40 60 5 20-20 40 10 110 3M488 210l27 3 15-23 30-25 30 40 50 30 15 25 50 35 57 25v20M785 270l15 15 5 60M785 270l45-5 110 10M800 268l30-28 10-25 30 20 60-10-60 40M85 135l35 15 40 0 40 25 50 15 50 10-20 25 20 30M175 245l25 20 40 30 30-20 20 25 20 10M380 740l5 30 85 15 20-70 7-30M470 785v45M920 370l20 20 30 20 60 0" />
    </g>
    <g transform="translate(1260 0)">
      <Border d="M300 810l-5-45-30-10-20-25 13-60 17-20 25 25v-30l55-45h45l55 40 30 5 20-17 45-3 35 23 45-10 5-23-43-25 28-45h25l-25-25 5-20 105-15 5-13 70-14 20-18 50 7 5 48 30-5 30 15 5 18 80-41 85 156 10-23 45 22 47-2" />
    </g>
    
    {/* 地名 */}
    <Ocean x="-617" y="909">North</Ocean>
    <Ocean x="-620" y="1046">Atlantic</Ocean>
    <Ocean x="-617" y="1186">Ocean</Ocean>
    <Place x="897" y="72">Finland</Place>
    <Place x="446" y="157">Norway</Place>
    <Place x="902" y="283" $small>Estonia</Place>
    <Place x="893" y="373" $small>Latvia</Place>
    <Place x="836" y="441" $small>Lithuania</Place>
    <Place x="942" y="528">Belarus</Place>
    <Place x="723" y="588">Poland</Place>
    <Place x="1022" y="702">Ukraine</Place>
    <Place x="967" y="784" $small>Moldova</Place>
    <Place x="456" y="421" $dark>Denmark</Place>
    <Place x="332" y="468" textAnchor="end" $dark>United</Place>
    <Place x="148" y="529" $dark>Kingdom</Place>
    <Place x="120" y="664" $city>London</Place>
    <Place x="745" y="769" textAnchor="end" $small>Austria</Place>
    <Place x="783" y="893" $small>Serbia</Place>
    <Place x="963" y="979" $city>Istanbul</Place>
    <Place x="392" y="1072" textAnchor="end" $city>Madrid</Place>
    <Place x="68" y="1200" $city>Rabat</Place>
    <Place x="54" y="1284">Morocco</Place>
    <Place x="470" y="1230">Tunisia</Place>
    <Place x="1024" y="1087" textAnchor="end" $dark>Greece</Place>
    <Place x="841" y="1166" $city>Athens</Place>
    <Place x="1242" y="1201">Syria</Place>
    <Place x="1132" y="1331" $city>Cairo</Place>
    <Place x="293" y="1408">Algeria</Place>
    <Place x="712" y="1441">Libya</Place>
    <Place x="-125" y="1485" $small>Western</Place>
    <Place x="-112" y="1536" $small>Sahara</Place>
    <Place x="-95" y="1644" $dark>Mauritania</Place>
    <Place x="1288" y="408" $city>Moscow</Place>
    <Place x="1505" y="400" $city>Kazan</Place>
    <Place x="1506" y="513" $city>Samara</Place>
    <Place x="1703" y="348" $city>Yekaterinburg</Place>
    <Place x="1905" y="748">Kazakhstan</Place>
    <Place x="1437" y="1023" $small>Azerbaijan</Place>
    <Place x="1803" y="983">Uzbekistan</Place>
    <Place x="2098" y="991">Kyrgyzstan</Place>
    <Place x="1672" y="1069">Turkmenistan</Place>
    <Place x="1658" y="1278">Iran</Place>
    <Place x="1467" y="1372" $small>Kuwait</Place>
    <Place x="1950" y="1408">Pakistan</Place>
    <Place x="2148" y="1238" textAnchor="end" $small>Afghanistan</Place>
    <Place x="1310" y="1546">Saudi Arabia</Place>
    <Place x="1708" y="1601">Oman</Place>
    <Place x="2403" y="1408">Nepal</Place>
    <Place x="1985" y="1646" $dark>Mumbai</Place>
    
    {/* データのある国 */}
    <Country d="M180 287l-15 43-12 42 15 33v35l24 28 23 2 17 30-4 25-38-3-2 23 12 25-25 18 25 14-28 23 33 3-40 32 10 8 55-25 10 5 85-11 22-19-12-26 15-14 2-25-32-8-20-65-42-65-30-3 24-40 8-40-55 6 27-50z" />
    <Country d="M117 453l33-3 12 30-12 30-35-12zM100 460l17-7-2 47 37 8-2 32-20 35-40 23-40-3 25-45-13-55z" />
    <Country d="M535 358h25l15 14-3 38-14 10 4 35-37 3-7-28 4-55zM592 425l28-17 17 17-12 40-25-15z" />
    <Country d="M490 522l-10 68-15 40-25-18-32 3-3-17 20-53 35-17z" />
    <Country d="M530 460l32-3 6 21 42 14 22-10 38 28 20 110 5 8-70 27 7 35 26 22-18 23v30l-110-5-25-5 13-47-51-20-2-68 15-30 10-65 48-23z" />
    <g transform="translate(0 780)">
      <Country d="M483 75l7-35 50-20 50-15h32l18 25-12 30 4 40 28 40 35 45 23 3 2 17 42 27-2 8h-25v18l17 17-17 17-10 28h-13l8-45-20-30-50-35-40-20-25-35-10-25-40-15-35 10-12-15zM632 318l68-3-2 47-70-34zM550 155l5 30-10 20-15-15 2-15zM543 215l17 23-2 42h-31l-2-45z" />
      <Country d="M100 125l100 10 62 2 56 28 7-5 60 15v17l-55 28-25 45v25l-15 40-40 32h-55l-30 23-20-30-30-5 15-50-12-15 22-90-35-5-15-10-10 8-12-38 32-10z" />
      <Country d="M865 218l75-13 45 7-5 8-60 12 20 18-40 12 15 23 25 15-20 40-40-10 25 35h-25l-18-35-7-40-25-22 15-38zM915 398l70 10-2 7-63-7z" />
      <Country d="M990 190l30-5 35 20v7l-45 13-25 20-3-25zM985 275l25-35 40-2 8-23h52l50-25 58-5 42 22 40 15 50-4 50-16 30 10 8 36 22 15-13 15 3 37 10 32-50-5-60 13-50 5-40 12-18 16-12-20-25-8-15 18-45 2-50-18-20 16-30-16h-27l-33-42 10-30z" />
      <Country d="M1225 430l15 5-8 40h-20z" />
      <Country d="M952 525l43-3 55 21 40-18 105 15 10 45-20 50h-17l27 55 33 55-5 25 32 28H953V575l-8-10z" />
    </g>
    <Country $hover d="M350 640l8-12 14-6 43 46 25 4 25 16 53 20-16 50-12 32-7 60 12 40-15 30-92 10-3 28-40-6-20-12-7 8-56-33 13-25 3-65-16-25-14-18-13-17-40-17-3-26 28-10 45 10-5-42 25 12 60-30z" />
    <g transform="translate(1260 780)">
      <Country d="M625 400l25 8 30-6 32-22 6-30 22-15 60 17 58-12 12-35 15 20 5 33 45-16 45-2-20 10-55 15-20 13v32l-5 25-30 15 8 20-26 20-2 25-30 10-35 5-10 45-55 8-45 2-40-10 23-25-6-25-20-5v-40l-4-25z" />
      <Country d="M1220-5l-33 5-15 72-64 13 17 55-10 45-55 25-60 30h-25l-25 22-2 38 27 15v30l25 20 5 20 45 20 28 35 2 35 12 15-22 5 5 30 60 37 25-2 20 20 40 12z" />
      <Country d="M1050 405l-20 25-70-2-13 12 13 40 25 20-20 20-5 30-65 80-25 2-32 28 22 30 15 42-55 3-17 15 37 42-10 8 30 30 55-12 3 22h302V650l-50-12-62-33 22-40-55-40-5-30 22-5-12-15-2-35z" />
    </g>
    
    {/* 値 */}
    <Value x="233" y="488">23</Value>
    <Value x="100" y="536">36</Value>
    <Value x="446" y="591">40</Value>
    <Value x="576" y="624">23</Value>
    <Value x="576" y="422">47</Value>
    <Value x="367" y="781">49</Value>
    <Value x="226" y="1044">53</Value>
    <Value x="624" y="973">58</Value>
    <Value x="912" y="1096">24</Value>
    <Value x="1218" y="1075">60</Value>
    <Value x="1230" y="1241">26</Value>
    <Value x="1099" y="1450">48</Value>
    <Value x="2053" y="1237">39</Value>
    <Value x="2433" y="1577">31</Value>
  </svg>
);



// --------------------------------------------------
//   App
// --------------------------------------------------

export default class App extends React.Component {
  
  renderHeader() {
    return (
      <Header>
        <ExitButton aria-label="Exit">
          <Icon width="18" height="18" viewBox="0 0 18 18"><path d="M7 6V1h9.500v16H7v-4M0 9h12M4.500 4.500L.5 9l4 4.500" /></Icon>
        </ExitButton>
        
        <Title>Analysis Subject</Title>
        
        <HeaderIcons>
          <button aria-label="Refresh"><Icon width="20" height="20" viewBox="0 0 20 20"><path d="M5.500 3.200A8.200 8.200 0 0 0 7.500 17.900M14.500 16.800A8.200 8.200 0 0 0 12.500 2.100M5.500 3.200A8 8 0 0 1 12.500 2.100M14.500 16.800A8 8 0 0 1 7.500 17.900M2.500 3h3.500v3.800M17.500 17H14v-3.800" /></Icon></button>
          <button aria-label="Flow"><Icon width="20" height="18" viewBox="0 0 20 18"><path d="M1 2h6v4H1zM1 12h6v4H1zM14 7h5v4h-5zM7 4h1.500l3 5-3 5H7M11.500 9H14" /></Icon></button>
        </HeaderIcons>
        
        <HeaderButtons>
          <VolumeSelect>
            <select aria-label="Used Data Volume"><option>Used Data Volume: Full Volume</option></select>
            <Icon width="16" height="12" viewBox="0 0 16 12" $color="#56627a"><path d="M1 1.500l7 8.500 7-8.500" strokeWidth="2.500" /></Icon>
          </VolumeSelect>
          <HeaderButton $primary>Save</HeaderButton>
          <HeaderButton>Update</HeaderButton>
          <HeaderButton $narrow aria-label="More"><svg width="16" height="4" fill="#14264b"><circle cx="2" cy="2" r="1.500" /><circle cx="8" cy="2" r="1.500" /><circle cx="14" cy="2" r="1.500" /></svg></HeaderButton>
        </HeaderButtons>
      </Header>
    );
  }
  
  
  renderToolbar() {
    return (
      <Toolbar>
        <HistoryButtons>
          <button aria-label="Undo"><Icon width="17" height="17" viewBox="0 0 17 17"><path d="M5 1L1.500 4.500 5 8M1.500 4.500H11a5.500 5.500 0 0 1 0 11H2" strokeWidth="1.800" /></Icon></button>
          <button aria-label="Redo" disabled><Icon width="17" height="17" viewBox="0 0 17 17" $color="#d3d6dc"><path d="M12 1l3.500 3.500L12 8M15.500 4.500H6a5.500 5.500 0 0 0 0 11h9" strokeWidth="1.800" /></Icon></button>
        </HistoryButtons>
        
        <VerticalLine $height={26} />
        
        <ToolButtons>
          <ToolButton>
            <Icon width="17" height="17" viewBox="0 0 17 17"><path d="M1 2l10-1.300v15.600L1 15zM11 2h5v13h-5M3.500 5l5 7M8.500 5l-5 7" /></Icon>
            Export Excel
          </ToolButton>
          <ToolButton>
            <Icon width="17" height="17" viewBox="0 0 17 17"><path d="M1 1h15v12.500H9L5.500 16v-2.500H1zM1 8h3l2-3 3 5.500L11.500 5 13 8h3" /></Icon>
            Performance Analysis
          </ToolButton>
          <ToolButton>
            <Icon width="17" height="17" viewBox="0 0 17 17"><path d="M1 1h15v12.500H9L6 16v-2.500H1zM5 10V7M8.500 10.500V4M12 10.500V6" /></Icon>
            Data Explanation
          </ToolButton>
        </ToolButtons>
        
        <DarkMode>
          Dark Preview Mode
          <Switch type="checkbox" role="switch" />
        </DarkMode>
      </Toolbar>
    );
  }
  
  
  renderFolder(name, open) {
    return (
      <Folder aria-expanded={Boolean(open)}>
        <svg width="10" height="10" fill="#14264b">{open ? <path d="M8 1v7H1z" /> : <path d="M3 0l6 5-6 5z" />}</svg>
        {name}
      </Folder>
    );
  }
  
  
  renderFields() {
    return (
      <FieldPanel>
        <AllSelect>
          <select aria-label="Table"><option>All</option></select>
          <Chevron size={16} />
        </AllSelect>
        
        <SearchRow>
          <SearchBox>
            <Icon width="20" height="20" viewBox="0 0 20 20"><circle cx="9" cy="9" r="7.800" /><path d="M14.500 14.500l4.500 4.500" /></Icon>
            <input type="text" placeholder="Search" aria-label="Search" />
          </SearchBox>
          <MoreButton aria-label="More"><Icon width="19" height="19" viewBox="0 0 19 19"><circle cx="9.500" cy="9.500" r="8.700" /><path d="M4.500 9.500h2m2 0h2m2 0h2" strokeWidth="2" /></Icon></MoreButton>
        </SearchRow>
        
        <Tree>
          <li>{this.renderFolder('National Environment …')}</li>
          <li>{this.renderFolder('Tourism Statistics')}</li>
          <li>{this.renderFolder('Regional Data Analysis')}</li>
          <li>
            {this.renderFolder('Company Employee Di…', true)}
            <FieldList>
              <Field><Icon width="18" height="18" viewBox="0 0 18 18" $color="#4b74c9"><path d="M2 2.500h15M9.500 2.500V16" /></Icon>Country</Field>
              <Field $globe><Globe />Country<em>(Lo…</em></Field>
              <Field $globe><Globe />Country<em>(Lat…</em></Field>
              <Field><Hash />Quantity</Field>
              <Field><Hash star />Count</Field>
            </FieldList>
          </li>
          <li>{this.renderFolder('Cross-Table Field')}</li>
        </Tree>
        
        <SideGrip><GripDots vertical /></SideGrip>
      </FieldPanel>
    );
  }
  
  
  renderChartPanel() {
    return (
      <ChartPanel>
        <ChartTypes>
          <PanelTitle>Chart Type</PanelTitle>
          <ChartGrid>
            {chartTypes.map(({ name, active, icon }) => (
              <ChartButton key={name} aria-label={name} $active={active}>
                <svg width="25" height="25" viewBox="0 0 25 25">{icon}</svg>
              </ChartButton>
            ))}
          </ChartGrid>
          <ScrollThumb />
          <Grip><GripDots /></Grip>
        </ChartTypes>
        
        <Tabs>
          <Tab>Graphic Property</Tab>
          <Tab $inactive>Component Style</Tab>
        </Tabs>
        
        <Properties>
          {properties.map(({ name, gear, hint }) => (
            <Property key={name}>
              <PropertyName>
                {name}
                {gear && <button aria-label={`${name} Settings`}><Gear /></button>}
              </PropertyName>
              {hint
                ? <DropHint>{hint}</DropHint>
                : <QuantityPill>Quantity<em>Sum</em></QuantityPill>
              }
            </Property>
          ))}
          <Grip><GripDots /></Grip>
        </Properties>
        
        <Filter>
          <FilterHead>
            <PanelTitle>Filter</PanelTitle>
            <button aria-label="Filter Menu"><svg width="4" height="12" fill="#14264b"><path d="M1 0h2v2H1zM1 5h2v2H1zM1 10h2v2H1z" /></svg></button>
          </FilterHead>
          <FilterBox><Caret /><span>Drag Field Here</span></FilterBox>
        </Filter>
      </ChartPanel>
    );
  }
  
  
  renderAxis(name, label, path) {
    return (
      <Axis>
        <AxisCell>
          <AxisName>{name}</AxisName>
          <AxisButton aria-label={`${name} Axis`}>
            <Icon width="28" height="28" viewBox="0 0 28 28"><path d={path} /></Icon>
            <svg width="7" height="5" fill="#14264b"><path d="M0 0h7L3.500 5z" /></svg>
          </AxisButton>
        </AxisCell>
        <AxisCell><Pill>{label}</Pill></AxisCell>
        <AxisCell><button aria-label="Clear"><Clear /></button></AxisCell>
      </Axis>
    );
  }
  
  
  render() {
    
    
    // --------------------------------------------------
    //   Return
    // --------------------------------------------------
    
    return (
      <React.Fragment>
        <GlobalStyle />
        
        <Page>
          {this.renderHeader()}
          {this.renderToolbar()}
          
          <Body>
            {this.renderFields()}
            {this.renderChartPanel()}
            
            <Main>
              {this.renderAxis('Ho…', 'Country (Longitude)', 'M4.500 0v28M1 4h26M1 25h26M10 6.500l4 4.500-4 5 4 5.500M19 6.500l4 4.500-4 5 4 5.500')}
              {this.renderAxis('Ve…', 'Country (Latitude)', 'M4.500 1v27M25 1v27M1 24.500h27M7.500 10l4.500-4 4.500 4L22 5M7.500 19l4.500-4 4.500 4 5.500-5')}
              
              <ManualPreview>
                <input type="checkbox" />
                Manual Preview
              </ManualPreview>
              
              <Preview>
                <PreviewTitle>Component7</PreviewTitle>
                <MapBox>
                  <WorldMap />
                  <MapControls>
                    <MapControlGroup>
                      <button aria-label="Zoom In"><Icon width="16" height="16" viewBox="0 0 16 16"><path d="M0 8h16M8 0v16" /></Icon></button>
                      <button aria-label="Zoom Out"><Icon width="16" height="16" viewBox="0 0 16 16"><path d="M0 8h16" strokeWidth="2" /></Icon></button>
                    </MapControlGroup>
                    <MapControlGroup>
                      <button aria-label="Auto"><Icon width="18" height="18" viewBox="0 0 18 18"><circle cx="9" cy="9" r="8.200" /><path d="M4.500 14.500L9 3.500l4.500 11M6.500 11h5" /></Icon></button>
                      <button aria-label="Mouse"><Icon width="18" height="18" viewBox="0 0 18 18" $color="#111"><rect x="1.500" y="1" width="15" height="16" rx="7" /><path d="M1.500 8.500h15M9 1v7.500" /></Icon></button>
                    </MapControlGroup>
                  </MapControls>
                  <Tooltip role="tooltip">
                    Country:France<br />
                    Quantity:49
                  </Tooltip>
                </MapBox>
              </Preview>
            </Main>
          </Body>
          
          <Footer>
            <DataButton>
              <Icon width="16" height="18" viewBox="0 0 16 18"><ellipse cx="8" cy="4" rx="7" ry="3" /><path d="M1 4v10c0 4 14 4 14 0V4M1 7.500c0 3.500 14 3.500 14 0M1 11c0 3.500 14 3.500 14 0" /></Icon>
              Data
            </DataButton>
            
            <Sheets>
              <Sheet $cut><span>Dashboard2</span></Sheet>
              {sheets.map(name => (
                <Sheet key={name} $active={name === 'Component7'}>
                  {name.startsWith('Component') ? <ComponentIcon /> : <DashboardIcon />}
                  {name}
                </Sheet>
              ))}
            </Sheets>
            
            <FooterTools>
              <VerticalLine $height={15} />
              <FooterGroup $start={27} $end={26}>
                <button aria-label="Previous"><Icon width="9" height="16" viewBox="0 0 9 16"><path d="M8 1L1 8l7 7" /></Icon></button>
                <button aria-label="Next" disabled><Icon width="9" height="16" viewBox="0 0 9 16" $color="#cdd2dc"><path d="M1 1l7 7-7 7" /></Icon></button>
              </FooterGroup>
              <VerticalLine $height={15} />
              <FooterGroup $start={27} $end={24}>
                <button aria-label="Add Component"><ComponentIcon add /></button>
                <button aria-label="Add Dashboard"><DashboardIcon add /></button>
                <button aria-label="Add Document"><svg width="20" height="20" fill="#e6edfb" stroke="#3f62a5"><path d="M1 1h15v15.500H1z" /><path d="M4 1v15.500" /><path d="M6.500 4h7v5h-7z" fill="#a9c2ef" stroke="none" /><path d="M6.500 11.500h7M6.500 14h4M12 16h8M16 12v8" strokeWidth="1.500" /></svg></button>
              </FooterGroup>
              <VerticalLine $height={15} />
              <FooterGroup $start={19} $end={0}>
                <button aria-label="Expand"><Icon width="19" height="19" viewBox="0 0 19 19"><circle cx="9.500" cy="9.500" r="8.700" /><path d="M5 11.500L9.500 7l4.500 4.500" /></Icon></button>
              </FooterGroup>
            </FooterTools>
          </Footer>
        </Page>
      </React.Fragment>
    );
    
  }
  
};
